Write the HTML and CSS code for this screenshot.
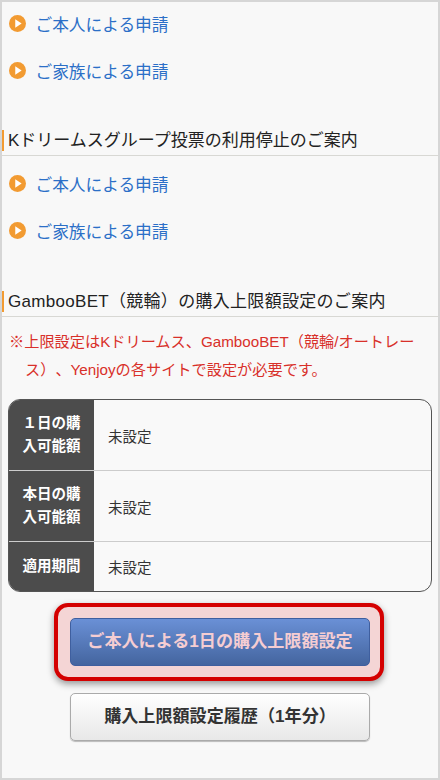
FILE: index.html
```html
<!DOCTYPE html>
<html lang="ja">
<head>
    <meta charset="UTF-8">
    <meta name="viewport" content="width=device-width, initial-scale=1.0">
    <title>購入上限額設定</title>
    <link rel="stylesheet" href="styles.css">
</head>
<body>
<div class="page">
    <!-- Apply links -->
    <ul class="links links-first">
        <li><a href="#"><svg class="arrow" viewBox="0 0 18 18"><circle cx="9" cy="9" r="9" fill="#f29b32"/><path d="M6.6 4.4 13.4 9l-6.8 4.6z" fill="#fff"/></svg>ご本人による申請</a></li>
        <li><a href="#"><svg class="arrow" viewBox="0 0 18 18"><circle cx="9" cy="9" r="9" fill="#f29b32"/><path d="M6.6 4.4 13.4 9l-6.8 4.6z" fill="#fff"/></svg>ご家族による申請</a></li>
    </ul>

    <h2 class="title"><span>Kドリームスグループ投票の利用停止のご案内</span></h2>
    <ul class="links">
        <li><a href="#"><svg class="arrow" viewBox="0 0 18 18"><circle cx="9" cy="9" r="9" fill="#f29b32"/><path d="M6.6 4.4 13.4 9l-6.8 4.6z" fill="#fff"/></svg>ご本人による申請</a></li>
        <li><a href="#"><svg class="arrow" viewBox="0 0 18 18"><circle cx="9" cy="9" r="9" fill="#f29b32"/><path d="M6.6 4.4 13.4 9l-6.8 4.6z" fill="#fff"/></svg>ご家族による申請</a></li>
    </ul>

    <h2 class="title title-last"><span>GambooBET（競輪）の購入上限額設定のご案内</span></h2>
    <p class="note">※上限設定はKドリームス、GambooBET（競輪/オートレース）、Yenjoyの各サイトで設定が必要です。</p>

    <!-- Limit table -->
    <table class="limits">
        <tr class="row-tall">
            <th>１日の購入可能額</th>
            <td>未設定</td>
        </tr>
        <tr class="row-tall">
            <th>本日の購入可能額</th>
            <td>未設定</td>
        </tr>
        <tr class="row-short">
            <th>適用期間</th>
            <td>未設定</td>
        </tr>
    </table>

    <div class="highlight">
        <a href="#" class="btn btn-blue">ご本人による1日の購入上限額設定</a>
    </div>
    <a href="#" class="btn btn-white">購入上限額設定履歴（1年分）</a>
</div>
</body>
</html>
```

FILE: styles.css
```css
* {
    box-sizing: border-box;
}

body {
    margin: 0;
    background: #d6d6d6;
    font-family: "Liberation Sans", "Noto Sans CJK JP", sans-serif;
    text-spacing-trim: space-all;
}

.page {
    height: 780px;
    margin: 0;
    border: 2px solid #d6d6d6;
    background: #f8f8f8;
    overflow: hidden;
}

/* Links */
.links {
    list-style: none;
    margin: 0;
    padding: 0;
}

.links-first {
    margin-top: -2px;
    margin-bottom: 36px;
}

.links li {
    height: 47px;
    display: flex;
    align-items: center;
    padding-left: 7px;
}

.links a {
    display: flex;
    align-items: center;
    font-size: 16.7px;
    color: #2b6fc7;
    text-decoration: none;
}

.arrow {
    width: 17px;
    height: 17px;
    margin-right: 10px;
    margin-left: -0.5px;
}

/* Section titles */
.title {
    margin: 0 0 4px;
    padding-bottom: 4px;
    border-bottom: 1px solid #d8d8d4;
    font-size: 17px;
    font-weight: normal;
    color: #222;
}

.title span {
    display: block;
    height: 21px;
    line-height: 21px;
    padding-left: 4px;
    border-left: 2px solid #f29b32;
}

.title-last {
    margin-top: 37px;
    margin-bottom: 0;
    letter-spacing: 0.3px;
}

.note {
    margin: 11px 0 0;
    padding: 0 15px 0 23px;
    text-indent: -16px;
    font-size: 15.2px;
    line-height: 28px;
    color: #d8302a;
}

/* Table */
.limits {
    width: 424px;
    height: 192px;
    margin: 15px 0 0 6px;
    border: 1px solid #555;
    border-radius: 12px;
    border-spacing: 0;
    overflow: hidden;
    background: #f9f9f9;
}

.limits th {
    width: 85px;
    padding: 0 8px;
    background: #4c4c4c;
    border-bottom: 1px solid #ccc;
    font-size: 14.5px;
    line-height: 23px;
    color: #fff;
    text-align: center;
}

.limits td {
    padding-left: 14px;
    border-bottom: 1px solid #ccc;
    font-size: 14.5px;
    color: #333;
}

.limits tr:last-child th,
.limits tr:last-child td {
    border-bottom: none;
}

.row-tall {
    height: 71px;
}

.row-short {
    height: 49px;
}

/* Buttons */
.btn {
    display: block;
    width: 300px;
    height: 48px;
    line-height: 46px;
    border-radius: 5px;
    font-size: 17.1px;
    font-weight: bold;
    text-align: center;
    text-decoration: none;
}

.highlight {
    width: 330px;
    height: 78px;
    margin: 11px 0 0 52px;
    padding: 11px 12px;
    border: 4px solid #d40000;
    border-radius: 14px;
    background: #f4d5d5;
    box-shadow: 0 3px 7px rgba(0, 0, 0, 0.4);
}

.btn-blue {
    border: 1px solid #3f5f9f;
    background: linear-gradient(#6a90d6, #44659f);
    color: #f5cdd2;
}

.btn-white {
    margin: 12px 0 0 68px;
    border: 1px solid #aaa;
    background: linear-gradient(#fff, #e8e8e8);
    box-shadow: 0 1px 1px rgba(0, 0, 0, 0.25);
    color: #333;
}
```
